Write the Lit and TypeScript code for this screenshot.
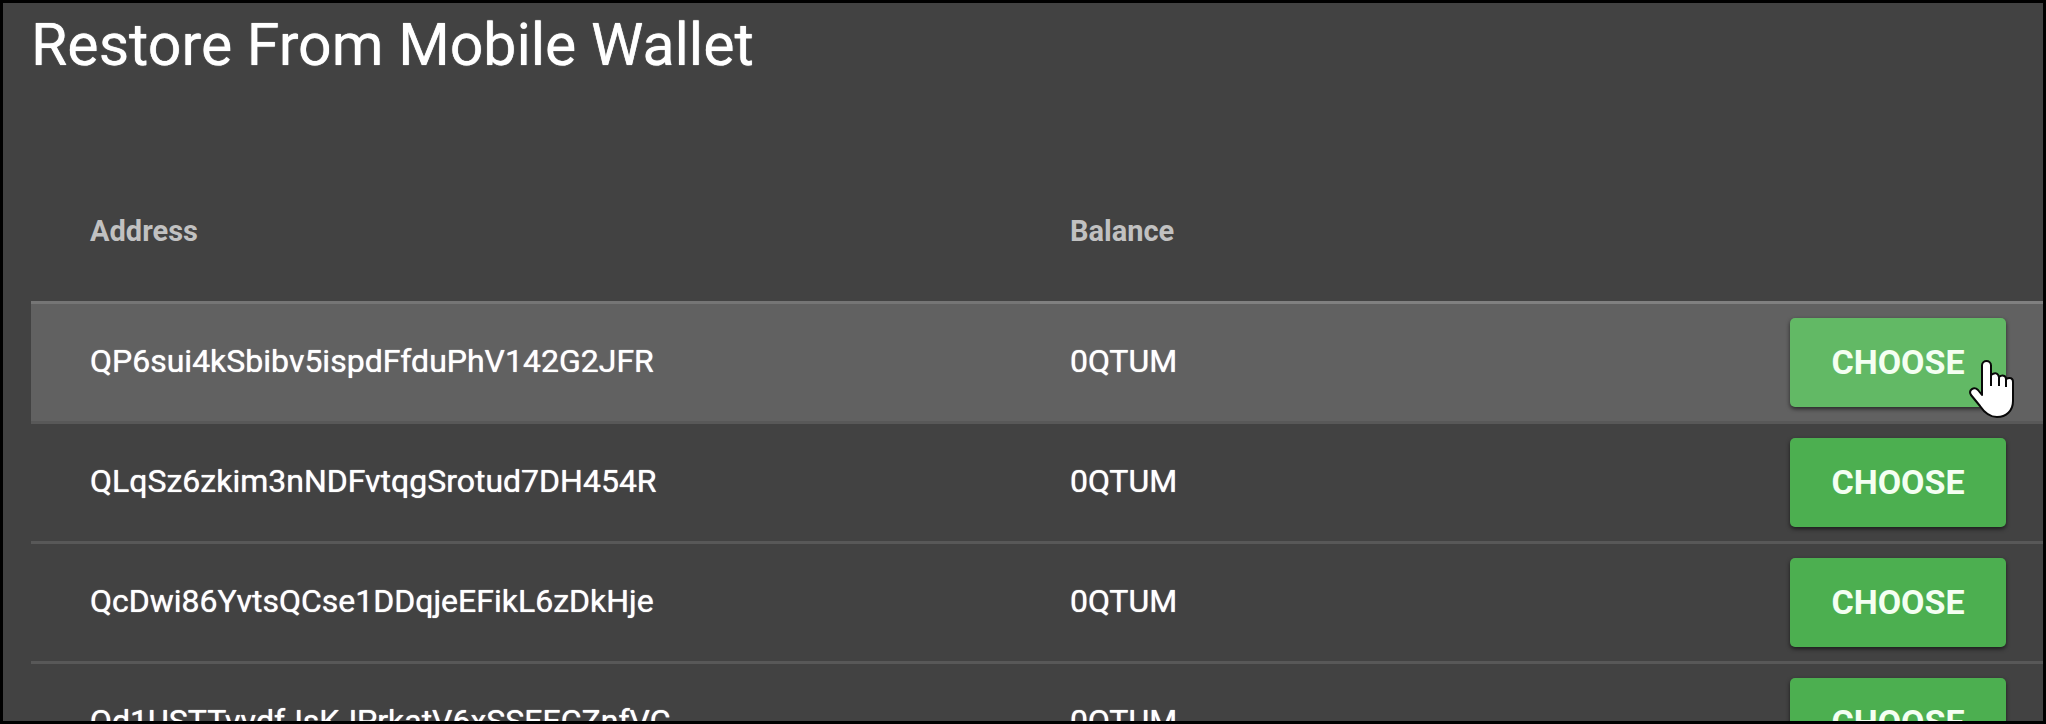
import { LitElement, html, css } from "lit";
import { customElement, property } from "lit/decorators.js";

interface WalletAddress {
  address: string;
  balance: string;
  active?: boolean;
}

@customElement("app-root")
export class AppRoot extends LitElement {
  @property({ attribute: false })
  wallets: WalletAddress[] = [
    { address: "QP6sui4kSbibv5ispdFfduPhV142G2JFR", balance: "0QTUM", active: true },
    { address: "QLqSz6zkim3nNDFvtqgSrotud7DH454R", balance: "0QTUM" },
    { address: "QcDwi86YvtsQCse1DDqjeEFikL6zDkHje", balance: "0QTUM" },
    { address: "Qd1USTTvvdfJsKJPrkatV6xSSEECZnfVC", balance: "0QTUM" },
  ];

  static styles = css`
    :host {
      display: block;
      box-sizing: border-box;
      height: 100vh;
      overflow: hidden;
      border: 3px solid #000;
      background: #424242;
      color: #fff;
      font-family: Roboto, sans-serif;
    }
    .panel {
      padding-left: 28px;
    }
    .title {
      margin: 0;
      padding: 6px 0 88px;
      font-size: 59px;
      line-height: 72px;
      font-weight: 400;
      text-shadow: 0 0 1px #fff;
    }
    .list {
      width: 100%;
      border-collapse: separate;
      border-spacing: 0;
      table-layout: fixed;
    }
    .address,
    .balance,
    .action {
      box-sizing: border-box;
    }
    .address {
      width: 999px;
      padding: 0 40px 3px 59px;
    }
    .balance {
      padding: 0 40px 3px;
    }
    .action {
      width: 300px;
      padding: 0 37px 0 0;
      text-align: right;
    }
    th {
      height: 132px;
      font-size: 29px;
      line-height: 40px;
      font-weight: 700;
      text-align: left;
      color: #c1c1c1;
    }
    thead .address,
    thead .balance {
      padding-bottom: 8px;
    }
    td {
      height: 120px;
      border-top: 3px solid #585858;
      font-size: 32px;
      line-height: 40px;
      font-weight: 400;
      text-shadow: 0 0 1px #fff;
      white-space: nowrap;
    }
    .active td {
      border-top-color: #808080;
      background: #616161;
    }
    .active .address {
      border-top-color: #757575;
    }
    .holder {
      position: relative;
      display: inline-block;
      vertical-align: middle;
    }
    .choose {
      display: block;
      height: 89px;
      min-width: 216px;
      padding: 0 32px 2px;
      border: 0;
      border-radius: 5px;
      background: #4caf50;
      color: #f4fff2;
      font: 700 34px/40px Roboto, sans-serif;
      box-shadow: 0 2px 4px rgba(0, 0, 0, 0.6);
      cursor: pointer;
    }
    .active .choose {
      background: #62b965;
    }
    .pointer {
      position: absolute;
      right: -8px;
      bottom: -12px;
      width: 46px;
      height: 60px;
    }
  `;

  private pointer() {
    return html`<svg class="pointer" viewBox="0 0 46 60" aria-hidden="true">
      <path
        d="M14 36V6.500C14 .5 23 .5 23 6.500V16C27 13 30 14 31 18C34 15.500 38 16.500 38 20C42 18 45 19 45 23V42C45 52 38 58 29 58C21 58 16 53 12 47L3 36C0 31 6 27 10 31Z"
        fill="#fff" stroke="#080808" stroke-width="2" stroke-linejoin="round" />
      <path d="M23 14V27M31 17V27M38 19V28" fill="none" stroke="#080808" stroke-width="2" />
    </svg>`;
  }

  render() {
    return html`<main class="panel">
      <h1 class="title">Restore From Mobile Wallet</h1>
      <table class="list">
        <thead>
          <tr>
            <th class="address" scope="col">Address</th>
            <th class="balance" scope="col">Balance</th>
            <th class="action"></th>
          </tr>
        </thead>
        <tbody>
          ${this.wallets.map(
            (w) => html`<tr class=${w.active ? "active" : ""}>
              <td class="address">${w.address}</td>
              <td class="balance">${w.balance}</td>
              <td class="action">
                <span class="holder">
                  <button class="choose" type="button">CHOOSE</button>
                  ${w.active ? this.pointer() : ""}
                </span>
              </td>
            </tr>`
          )}
        </tbody>
      </table>
    </main>`;
  }
}
